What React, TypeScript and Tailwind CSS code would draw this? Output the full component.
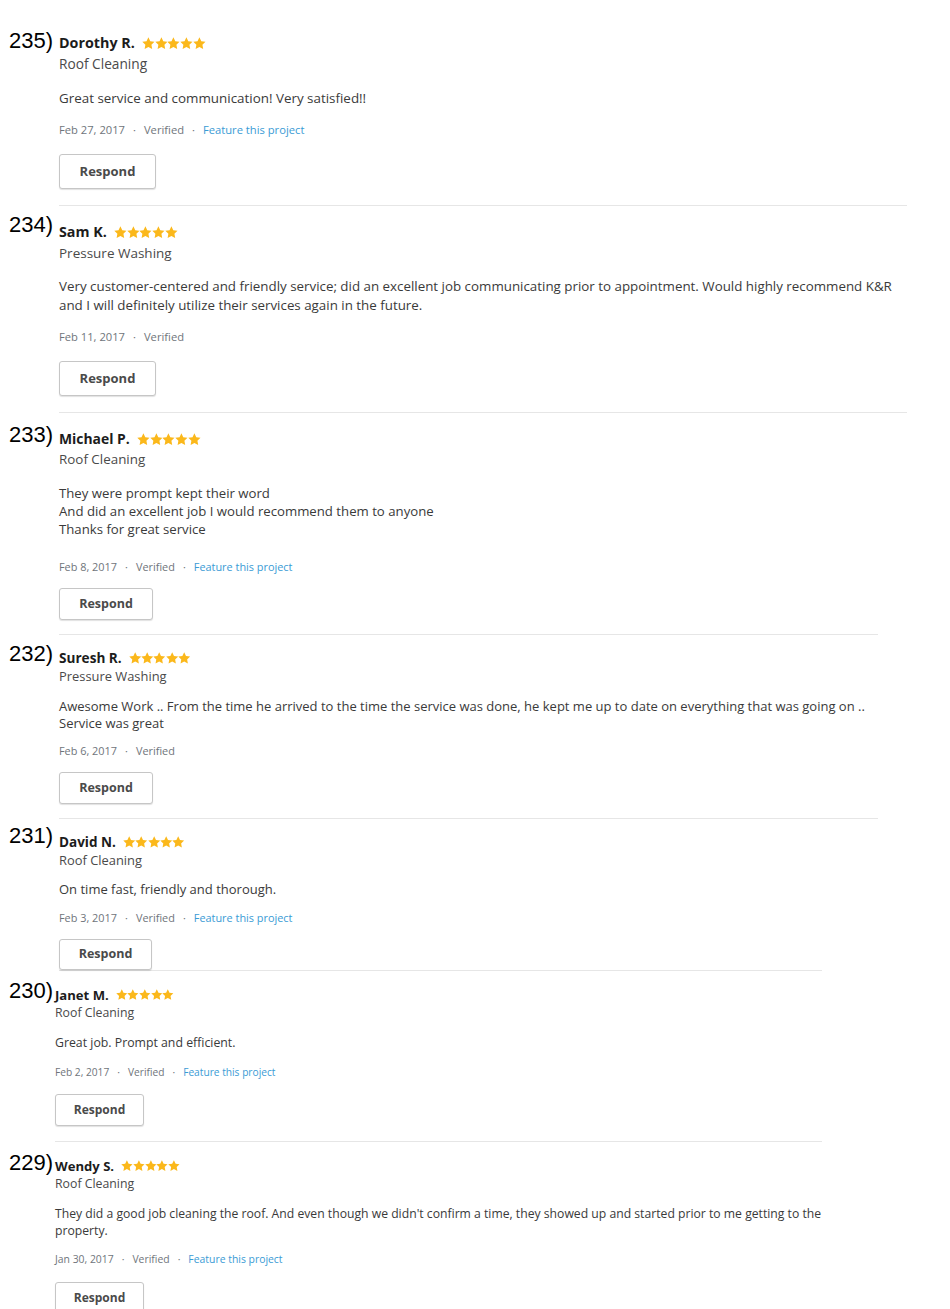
import React from "react";

type Block = {
  num: string;
  name: string;
  category: string;
  lines: string[];
  date: string;
  feature: boolean;
  numCol: string;
  numPt: string;
  pt: string;
  nameSize: string;
  star: string;
  catCls: string;
  textCls: string;
  textMt: string;
  dateCls: string;
  dateMt: string;
  btnCls: string;
  btnMt: string;
  pb: string;
  divider: string;
};

const blocks: Block[] = [
  {
    num: "235",
    name: "Dorothy R.",
    category: "Roof Cleaning",
    lines: ["Great service and communication! Very satisfied!!"],
    date: "Feb 27, 2017",
    feature: true,
    numCol: "w-[59px]",
    numPt: "pt-[30px]",
    pt: "pt-[33px]",
    nameSize: "text-[14.3px]",
    star: "w-[12.8px] h-[12.8px]",
    catCls: "text-[13.7px] leading-[18px] mt-[2px]",
    textCls: "text-[13.4px] leading-[19px]",
    textMt: "mt-[16px]",
    dateCls: "text-[11.2px] leading-[16px]",
    dateMt: "mt-[14px]",
    btnCls: "w-[97px] h-[35px] text-[13px]",
    btnMt: "mt-[16px]",
    pb: "pb-[16px]",
    divider: "border-b border-[#e6e6e6] mr-[43px]",
  },
  {
    num: "234",
    name: "Sam K.",
    category: "Pressure Washing",
    lines: [
      "Very customer-centered and friendly service; did an excellent job communicating prior to appointment. Would highly recommend K&R",
      "and I will definitely utilize their services again in the future.",
    ],
    date: "Feb 11, 2017",
    feature: false,
    numCol: "w-[59px]",
    numPt: "pt-[8px]",
    pt: "pt-[16px]",
    nameSize: "text-[14.3px]",
    star: "w-[12.8px] h-[12.8px]",
    catCls: "text-[13.5px] leading-[18px] mt-[2px]",
    textCls: "text-[13.35px] leading-[19px]",
    textMt: "mt-[15px]",
    dateCls: "text-[11.2px] leading-[16px]",
    dateMt: "mt-[14px]",
    btnCls: "w-[97px] h-[35px] text-[13px]",
    btnMt: "mt-[16px]",
    pb: "pb-[16px]",
    divider: "border-b border-[#e6e6e6] mr-[43px]",
  },
  {
    num: "233",
    name: "Michael P.",
    category: "Roof Cleaning",
    lines: [
      "They were prompt kept their word",
      "And did an excellent job I would recommend them to anyone",
      "Thanks for great service",
    ],
    date: "Feb 8, 2017",
    feature: true,
    numCol: "w-[59px]",
    numPt: "pt-[11px]",
    pt: "pt-[16px]",
    nameSize: "text-[13.9px]",
    star: "w-[12.8px] h-[12.8px]",
    catCls: "text-[13.4px] leading-[18px] mt-[1px]",
    textCls: "text-[13.2px] leading-[18px]",
    textMt: "mt-[16px]",
    dateCls: "text-[10.9px] leading-[16px]",
    dateMt: "mt-[21px]",
    btnCls: "w-[94px] h-[32px] text-[12.5px]",
    btnMt: "mt-[13px]",
    pb: "pb-[14px]",
    divider: "border-b border-[#e6e6e6] mr-[72px]",
  },
  {
    num: "232",
    name: "Suresh R.",
    category: "Pressure Washing",
    lines: [
      "Awesome Work .. From the time he arrived to the time the service was done, he kept me up to date on everything that was going on ..",
      "Service was great",
    ],
    date: "Feb 6, 2017",
    feature: false,
    numCol: "w-[59px]",
    numPt: "pt-[8px]",
    pt: "pt-[13px]",
    nameSize: "text-[13.6px]",
    star: "w-[12.4px] h-[12.4px]",
    catCls: "text-[12.9px] leading-[17px]",
    textCls: "text-[13px] leading-[17px]",
    textMt: "mt-[13px]",
    dateCls: "text-[10.9px] leading-[16px]",
    dateMt: "mt-[11px]",
    btnCls: "w-[94px] h-[32px] text-[12.5px]",
    btnMt: "mt-[13px]",
    pb: "pb-[14px]",
    divider: "border-b border-[#e6e6e6] mr-[72px]",
  },
  {
    num: "231",
    name: "David N.",
    category: "Roof Cleaning",
    lines: ["On time fast, friendly and thorough."],
    date: "Feb 3, 2017",
    feature: true,
    numCol: "w-[59px]",
    numPt: "pt-[6px]",
    pt: "pt-[13px]",
    nameSize: "text-[13.5px]",
    star: "w-[12.4px] h-[12.4px]",
    catCls: "text-[12.9px] leading-[17px]",
    textCls: "text-[13px] leading-[17px]",
    textMt: "mt-[12px]",
    dateCls: "text-[10.9px] leading-[16px]",
    dateMt: "mt-[12px]",
    btnCls: "w-[93px] h-[31px] text-[12.5px]",
    btnMt: "mt-[13px]",
    pb: "pb-0",
    divider: "border-b border-[#e6e6e6] mr-[128px]",
  },
  {
    num: "230",
    name: "Janet M.",
    category: "Roof Cleaning",
    lines: ["Great job. Prompt and efficient."],
    date: "Feb 2, 2017",
    feature: true,
    numCol: "w-[55px]",
    numPt: "pt-[9px]",
    pt: "pt-[14px]",
    nameSize: "text-[13.1px]",
    star: "w-[11.6px] h-[11.6px]",
    catCls: "text-[12.3px] leading-[16px]",
    textCls: "text-[12.3px] leading-[17px]",
    textMt: "mt-[13px]",
    dateCls: "text-[10.2px] leading-[16px]",
    dateMt: "mt-[13px]",
    btnCls: "w-[89px] h-[32px] text-[12px]",
    btnMt: "mt-[14px]",
    pb: "pb-[15px]",
    divider: "border-b border-[#e6e6e6] mr-[128px]",
  },
  {
    num: "229",
    name: "Wendy S.",
    category: "Roof Cleaning",
    lines: [
      "They did a good job cleaning the roof. And even though we didn't confirm a time, they showed up and started prior to me getting to the",
      "property.",
    ],
    date: "Jan 30, 2017",
    feature: true,
    numCol: "w-[55px]",
    numPt: "pt-[10px]",
    pt: "pt-[14px]",
    nameSize: "text-[13.1px]",
    star: "w-[11.8px] h-[11.8px]",
    catCls: "text-[12.3px] leading-[16px]",
    textCls: "text-[12.2px] leading-[17px]",
    textMt: "mt-[13px]",
    dateCls: "text-[10.4px] leading-[16px]",
    dateMt: "mt-[12px]",
    btnCls: "w-[89px] h-[32px] text-[12px]",
    btnMt: "mt-[15px]",
    pb: "pb-0",
    divider: "",
  },
];

const Stars = ({ cls }: { cls: string }) => (
  <span className="flex items-center ml-[7px]">
    {[0, 1, 2, 3, 4].map((i) => (
      <svg key={i} viewBox="1 1 22 22" className={cls}>
        <polygon
          fill="#fbb81b"
          points="12,1.5 15.2,8.1 22.5,9.1 17.2,14.2 18.5,21.5 12,18 5.5,21.5 6.8,14.2 1.5,9.1 8.8,8.1"
        />
      </svg>
    ))}
  </span>
);

const Review = ({ b }: { b: Block }) => (
  <div className="flex">
    <div className={`${b.numCol} shrink-0 pl-[9px] ${b.numPt}`}>
      <span className="block font-['Liberation_Sans',Arial,sans-serif] text-[22px] leading-none text-black">
        {b.num})
      </span>
    </div>
    <div className={`flex-1 ${b.pt} ${b.pb} ${b.divider}`}>
      <div className="flex items-center h-[20px]">
        <span className={`${b.nameSize} leading-[20px] font-bold text-[#1c1c1c]`}>{b.name}</span>
        <Stars cls={b.star} />
      </div>
      <div className={`${b.catCls} text-[#4a4a4a]`}>{b.category}</div>
      <div className={`${b.textMt} ${b.textCls} text-[#3a3a3a] whitespace-nowrap`}>
        {b.lines.map((l, i) => (
          <div key={i}>{l}</div>
        ))}
      </div>
      <div className={`${b.dateMt} ${b.dateCls} flex items-center text-[#6f757b]`}>
        <span>{b.date}</span>
        <span className="mx-[8px]">·</span>
        <span>Verified</span>
        {b.feature && (
          <>
            <span className="mx-[8px]">·</span>
            <span className="text-[#3a9bd5]">Feature this project</span>
          </>
        )}
      </div>
      <button
        type="button"
        className={`${b.btnMt} ${b.btnCls} block bg-white border border-[#c6c6c6] rounded-[3px] shadow-[0_1px_1px_rgba(0,0,0,0.12)] font-bold text-[#4a4a4a]`}
      >
        Respond
      </button>
    </div>
  </div>
);

export default function App() {
  return (
    <div className="w-[950px] h-[1309px] overflow-hidden bg-white font-['Open_Sans',sans-serif]">
      {blocks.map((b) => (
        <Review key={b.num} b={b} />
      ))}
    </div>
  );
}
